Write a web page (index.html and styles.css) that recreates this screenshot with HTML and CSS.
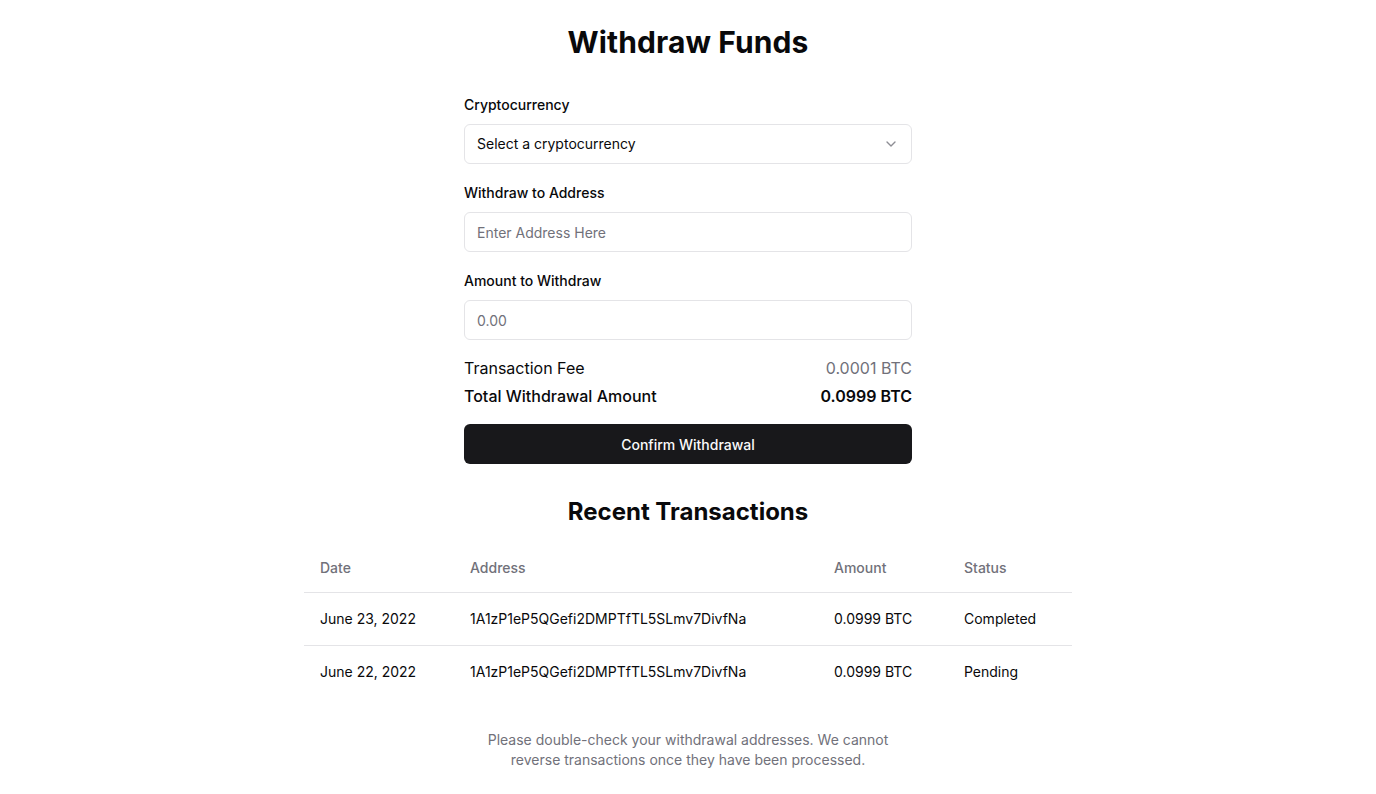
FILE: index.html
```html
<!DOCTYPE html>
<html lang="en">
<head>
<meta charset="utf-8">
<title>Withdraw Funds</title>
<link rel="stylesheet" href="styles.css">
</head>
<body>
<main class="page">
  <h1 class="title">Withdraw Funds</h1>
  <form class="form">
    <div class="field">
      <label class="label">Cryptocurrency</label>
      <div class="select">
        <span>Select a cryptocurrency</span>
        <svg class="chev" width="16" height="16" viewBox="0 0 24 24" fill="none" stroke="currentColor" stroke-width="2" stroke-linecap="round" stroke-linejoin="round"><path d="m6 9 6 6 6-6"/></svg>
      </div>
    </div>
    <div class="field">
      <label class="label">Withdraw to Address</label>
      <input class="input" type="text" placeholder="Enter Address Here">
    </div>
    <div class="field">
      <label class="label">Amount to Withdraw</label>
      <input class="input" type="text" placeholder="0.00">
    </div>
    <div class="summary">
      <div class="row"><span>Transaction Fee</span><span class="muted">0.0001 BTC</span></div>
      <div class="row total"><span>Total Withdrawal Amount</span><span class="strong">0.0999 BTC</span></div>
    </div>
    <button class="btn" type="button">Confirm Withdrawal</button>
  </form>
  <h2 class="subtitle">Recent Transactions</h2>
  <table class="table">
    <thead>
      <tr><th class="c1">Date</th><th class="c2">Address</th><th class="c3">Amount</th><th class="c4">Status</th></tr>
    </thead>
    <tbody>
      <tr><td>June 23, 2022</td><td>1A1zP1eP5QGefi2DMPTfTL5SLmv7DivfNa</td><td>0.0999 BTC</td><td>Completed</td></tr>
      <tr><td>June 22, 2022</td><td>1A1zP1eP5QGefi2DMPTfTL5SLmv7DivfNa</td><td>0.0999 BTC</td><td>Pending</td></tr>
    </tbody>
  </table>
  <p class="note">Please double-check your withdrawal addresses. We cannot reverse transactions once they have been processed.</p>
</main>
</body>
</html>
```
FILE: styles.css
```css
* { box-sizing: border-box; }
html, body { margin: 0; padding: 0; background: #fff; }
body {
  font-family: Inter, "Noto Sans", sans-serif;
  color: #09090b;
}
.page {
  display: flex;
  flex-direction: column;
  align-items: center;
  padding: 24px 16px;
}
.title {
  margin: 0;
  font-size: 30px;
  line-height: 36px;
  font-weight: 700;
  letter-spacing: 0.1px;
}
.form {
  width: 448px;
  margin-top: 32px;
  display: flex;
  flex-direction: column;
  gap: 16px;
}
.field {
  display: flex;
  flex-direction: column;
  gap: 8px;
}
.label {
  font-size: 14px;
  line-height: 24px;
  font-weight: 500;
  padding-top: 1px;
  margin-bottom: -1px;
}
.select, .input {
  height: 40px;
  border: 1px solid #e4e4e7;
  border-radius: 6px;
  padding: 0 12px;
  font-family: inherit;
  font-size: 14px;
  background: #fff;
  color: #09090b;
}
.select {
  display: flex;
  align-items: center;
  justify-content: space-between;
  padding-bottom: 1px;
}
.chev { color: #71717a; opacity: 0.8; }
.input::placeholder { color: #71717a; }
.input { outline: none; }
.summary {
  display: flex;
  flex-direction: column;
  gap: 4px;
}
.row {
  display: flex;
  justify-content: space-between;
  font-size: 16px;
  line-height: 24px;
}
.total { font-weight: 500; }
.muted { color: #71717a; }
.strong { font-weight: 600; }
.btn {
  height: 40px;
  border: none;
  border-radius: 6px;
  background: #18181b;
  color: #fafafa;
  font-family: inherit;
  font-size: 14px;
  font-weight: 500;
  padding-bottom: 1px;
}
.subtitle {
  margin: 32px 0 0;
  font-size: 24px;
  line-height: 32px;
  font-weight: 700;
}
.table {
  width: 768px;
  margin-top: 16px;
  border-collapse: collapse;
  font-size: 14px;
}
.table th {
  height: 48px;
  padding: 0 16px;
  text-align: left;
  font-weight: 500;
  color: #71717a;
  border-bottom: 1px solid #e4e4e7;
}
.table td {
  height: 53px;
  padding: 0 16px;
  border-bottom: 1px solid #e4e4e7;
}
.table tbody tr:last-child td { border-bottom: none; }
.c1 { width: 150px; }
.c2 { width: 364px; }
.c3 { width: 130px; }
.c4 { width: 124px; }
.note {
  width: 448px;
  margin: 32px 0 0;
  text-align: center;
  font-size: 14px;
  line-height: 20px;
  color: #71717a;
}
```
